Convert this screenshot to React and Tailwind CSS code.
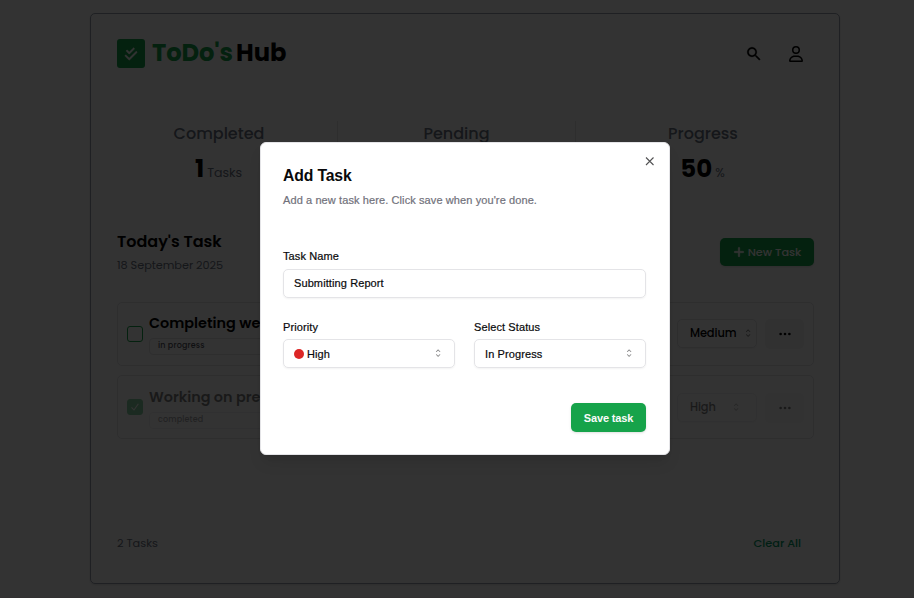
import React from "react";
import { FaCheckDouble, FaPlus, FaRegUser } from "react-icons/fa6";
import { IoMdSearch } from "react-icons/io";
import { BsThreeDots } from "react-icons/bs";

function CaretSort() {
  return (
    <svg className="size-[12.25px] shrink-0 opacity-50" viewBox="0 0 15 15" fill="currentColor">
      <path d="M4.93179 5.43179C4.75605 5.60753 4.75605 5.89245 4.93179 6.06819C5.10753 6.24392 5.39245 6.24392 5.56819 6.06819L7.49999 4.13638L9.43179 6.06819C9.60753 6.24392 9.89245 6.24392 10.0682 6.06819C10.2439 5.89245 10.2439 5.60753 10.0682 5.43179L7.81819 3.18179C7.73379 3.0974 7.61933 3.04999 7.49999 3.04999C7.38064 3.04999 7.26618 3.0974 7.18179 3.18179L4.93179 5.43179ZM10.0682 9.56819C10.2439 9.39245 10.2439 9.10753 10.0682 8.93179C9.89245 8.75606 9.60753 8.75606 9.43179 8.93179L7.49999 10.8636L5.56819 8.93179C5.39245 8.75606 5.10753 8.75606 4.93179 8.93179C4.75605 9.10753 4.75605 9.39245 4.93179 9.56819L7.18179 11.8182C7.35753 11.9939 7.64245 11.9939 7.81819 11.8182L10.0682 9.56819Z" />
    </svg>
  );
}

function Header() {
  return (
    <header className="flex h-[29px] items-center">
      <div className="flex h-[29px] w-7 items-center justify-center rounded-[3px] bg-[#16a34a] text-white">
        <FaCheckDouble className="size-[14px] stroke-current [stroke-width:14px]" />
      </div>
      <h1 className="ml-[7px] flex -translate-y-px text-[24.2px] leading-7 font-bold">
        <span className="w-[84px] tracking-[-0.1px] text-[#16a34a]">ToDo's</span>
        <span>Hub</span>
      </h1>
      <div className="mr-[11px] ml-auto flex items-center gap-[27px]">
        <IoMdSearch className="size-[17.5px] stroke-current [stroke-width:8px]" />
        <FaRegUser className="h-4 w-[14px]" />
      </div>
    </header>
  );
}

function Stat({ label, value, unit, className }) {
  return (
    <div className={`flex flex-col items-center ${className}`}>
      <div className="mt-px h-6 text-[16px] leading-6 font-medium text-gray-500">{label}</div>
      <div className="mt-[5px] mr-[1px] flex items-baseline gap-[3px] leading-9">
        <span className="text-[24.5px] font-bold">{value}</span>
        <span className="text-[12.6px] text-gray-500">{unit}</span>
      </div>
    </div>
  );
}

function TaskRow({ title, status, priority, done }) {
  return (
    <div className="flex h-16 rounded-[5px] border border-zinc-200 pr-[9px] pl-[9px]">
      <div
        className={`mt-[23px] flex size-4 items-center justify-center rounded-[3px] border border-[#16a34a] ${
          done ? "bg-[#16a34a] text-white opacity-50" : ""
        }`}
      >
        {done && (
          <svg viewBox="0 0 14 14" className="size-[14px]" fill="none" stroke="currentColor" strokeWidth="1.1">
            <path d="M3.5 7.3 6 10 10.4 3.8" />
          </svg>
        )}
      </div>
      <div className={`ml-[6px] w-[440px] ${done ? "mt-[9px] opacity-50" : "mt-[8px]"}`}>
        <div className="h-6 text-[14.4px] leading-6 font-semibold whitespace-nowrap">{title}</div>
        <div className="mt-[3px] flex h-[17px] items-center rounded-[4px] border border-zinc-200 px-2 pb-px text-[8px] font-medium tracking-[0.15px] text-zinc-600">
          {status}
        </div>
      </div>
      <div className={`ml-auto flex gap-2 ${done ? "mt-[17px] opacity-50" : "mt-4"}`}>
        <div
          className={`flex h-[29px] w-20 items-center rounded-[5px] border border-zinc-200 pl-3 text-[11.4px] font-medium tracking-[-0.1px] shadow-xs ${
            done ? "gap-[14px]" : "gap-[6px]"
          }`}
        >
          <span className="pt-px">{priority}</span>
          <CaretSort />
        </div>
        <div className="flex h-[30px] w-[39px] items-center justify-center rounded-[5px] bg-zinc-100">
          <BsThreeDots className="size-[14px]" />
        </div>
      </div>
    </div>
  );
}

function Page() {
  return (
    <div className="flex h-[598px] flex-col items-start border-b border-[#f8f0f4] bg-white pt-[13px] pl-[90px]">
      <main className="flex h-[571px] w-[750px] flex-col rounded-[5px] border border-gray-400 pt-[25px] pr-[25px] pl-[26px] shadow-sm">
        <Header />
        <section className="mt-[53px] flex h-[65px]">
          <Stat label="Completed" value="1" unit="Tasks" className="w-[221px] border-r border-zinc-200 pr-4" />
          <Stat label="Pending" value="1" unit="Tasks" className="w-[238px] border-r border-zinc-200" />
          <Stat label="Progress" value="50" unit="%" className="flex-1 pl-4" />
        </section>
        <section className="mt-[43px] flex h-[45px] justify-between">
          <div>
            <h2 className="mt-px text-[16px] leading-6 font-semibold">Today's Task</h2>
            <p className="mt-[2px] text-[11.3px] leading-[18px] tracking-[-0.05px] text-gray-500">18 September 2025</p>
          </div>
          <button className="mt-[9px] flex h-7 w-[94px] items-center justify-center gap-[3px] rounded-[5px] bg-[#16a34a] text-[11.3px] font-medium text-white shadow">
            <FaPlus className="size-[12px] stroke-current [stroke-width:20px]" />
            <span className="pt-px">New Task</span>
          </button>
        </section>
        <section className="mt-[28px] flex flex-col gap-[9px]">
          <TaskRow title="Completing we" status="in progress" priority="Medium" />
          <TaskRow title="Working on pre" status="completed" priority="High" done />
        </section>
        <footer className="mt-[95px] flex justify-between pr-[13px] text-[11.3px] leading-[18px]">
          <span className="text-gray-500">2 Tasks</span>
          <span className="font-medium text-emerald-600">Clear All</span>
        </footer>
      </main>
    </div>
  );
}

function Select({ label, children }) {
  return (
    <div className="w-[172px]">
      <div className="h-4 leading-4">{label}</div>
      <div className="mt-1 flex h-[29px] items-center justify-between rounded-[5px] border border-zinc-200 pr-[10px] pl-[10px] shadow-xs">
        <span className="flex items-center gap-[3px] pt-px">{children}</span>
        <CaretSort />
      </div>
    </div>
  );
}

function Dialog() {
  return (
    <div
      role="dialog"
      className="absolute top-[142px] left-[260px] h-[313px] w-[410px] rounded-[6px] border border-zinc-200 bg-white pt-[23px] pr-[23px] pl-[22px] font-['Liberation_Sans',Arial,sans-serif] text-[11px] tracking-[0.1px] text-zinc-950 shadow-lg [-webkit-text-stroke:0.2px]"
    >
      <h2 className="h-5 text-[15.75px] leading-5 font-bold tracking-[-0.15px] [-webkit-text-stroke:0px]">Add Task</h2>
      <p className="mt-[6px] h-4 leading-4 text-zinc-500">Add a new task here. Click save when you're done.</p>
      <div className="mt-[40px] h-4 leading-4">Task Name</div>
      <div className="mt-[5px] flex h-[29px] items-center rounded-[5px] border border-zinc-200 px-[10px] shadow-xs">
        Submitting Report
      </div>
      <div className="mt-[21px] flex justify-between">
        <Select label="Priority">
          <i className="-mt-px size-[10px] rounded-full bg-[#dc2626]" />
          High
        </Select>
        <Select label="Select Status">In Progress</Select>
      </div>
      <div className="mt-[35px] flex justify-end">
        <button className="h-[29px] w-[75px] rounded-[5px] bg-[#16a34a] pt-px font-bold tracking-[-0.15px] text-zinc-50 shadow [-webkit-text-stroke:0px]">
          Save task
        </button>
      </div>
      <svg
        className="absolute top-[11px] right-[12px] size-[14px] opacity-70"
        viewBox="0 0 14 14"
        stroke="currentColor"
        strokeWidth="1.1"
      >
        <path d="M3 3.5 10.5 11M10.5 3.5 3 11" />
      </svg>
    </div>
  );
}

export default function App() {
  return (
    <div className="relative h-[598px] w-[914px] overflow-hidden font-[Poppins,Inter,sans-serif] text-black">
      <Page />
      <div className="absolute inset-0 bg-black/80" />
      <Dialog />
    </div>
  );
}
